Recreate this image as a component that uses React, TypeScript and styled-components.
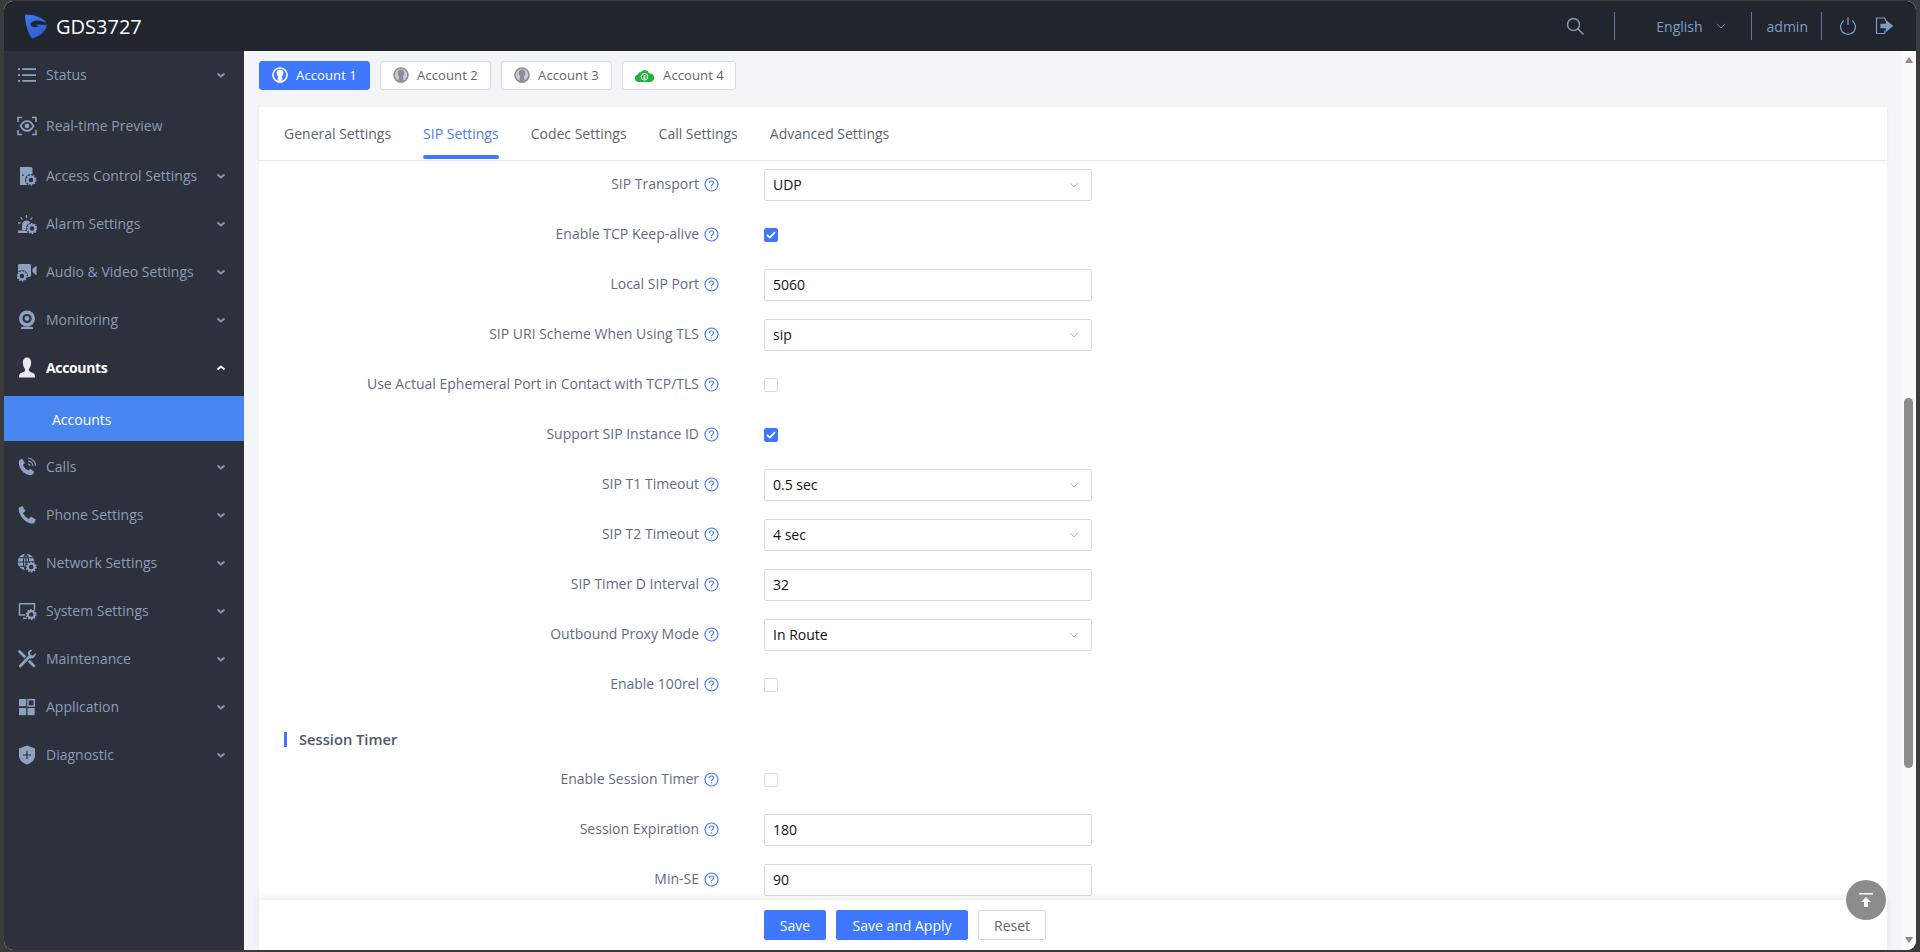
import React from "react";
import styled, { createGlobalStyle } from "styled-components";

const Global = createGlobalStyle`
  html, body { margin: 0; padding: 0; height: 100%; overflow: hidden; background: #3b3b3b; }
  #root { height: 100%; }
  * { box-sizing: border-box; }
  body { font-family: "Open Sans", "Liberation Sans", sans-serif; }
`;

const Frame = styled.div`
  width: 1912px; height: 949px; margin: 1px 4px 0; border-radius: 9px; overflow: hidden;
  display: flex; flex-direction: column; background: #f3f6f9; position: relative;
`;
const Header = styled.header`
  height: 50px; flex: none; background: #20252e; display: flex; align-items: center; color: #7d9dc6; font-size: 14px;
`;
const Brand = styled.div`
  display: flex; align-items: center; color: #fff; font-size: 20px; padding-left: 20px; gap: 8px; flex: 1;
  svg { flex: none; }
`;
const HeaderIcon = styled.span<{ $mr?: number }>`
  display: flex; align-items: center; margin-right: ${(p) => p.$mr ?? 0}px;
`;
const Sep = styled.span<{ $ml: number; $mr: number }>`
  width: 1px; height: 28px; background: #5f7c9e; margin: 0 ${(p) => p.$mr}px 0 ${(p) => p.$ml}px;
`;
const Lang = styled.span`
  display: flex; align-items: center; gap: 13px;
`;
const Row = styled.div`
  flex: 1; display: flex; min-height: 0;
`;
const Sidebar = styled.nav`
  width: 240px; flex: none; background: #2d313c; color: #8b9cb8; font-size: 14px;
`;
const Item = styled.div<{ $tall?: boolean; $active?: boolean }>`
  height: ${(p) => (p.$tall ? 54 : 48)}px; margin-bottom: ${(p) => (p.$tall ? -1 : 0)}px;
  display: flex; align-items: center; padding: 0 18px 0 13px;
  color: ${(p) => (p.$active ? "#fff" : "#8b9cb8")};
  font-weight: ${(p) => (p.$active ? 700 : 400)};
  letter-spacing: ${(p) => (p.$active ? "-0.35px" : "0")};
`;
const ItemIcon = styled.span<{ $active?: boolean }>`
  width: 20px; height: 20px; display: flex; align-items: center; justify-content: center; margin-right: 9px;
  color: ${(p) => (p.$active ? "#e6e9ee" : "#8da2c0")};
`;
const ItemLabel = styled.span`
  flex: 1; white-space: nowrap; padding-bottom: 2px;
`;
const SubItem = styled.div`
  height: 45px; margin: 4px 0 2px; background: #4785f0; color: #fff; display: flex; align-items: center; padding: 1px 0 0 48px; font-size: 14px;
`;
const Main = styled.main`
  flex: 1; min-width: 0; display: flex; flex-direction: column; padding: 10px 14px 0 15px; position: relative;
`;
const Accounts = styled.div`
  display: flex; gap: 10px; margin-bottom: 17px; flex: none;
`;
const AccountBtn = styled.div<{ $on?: boolean; $w: number }>`
  width: ${(p) => p.$w}px; height: 29px; border-radius: 3px; display: flex; align-items: center; justify-content: center; gap: 8px;
  font-size: 13px; letter-spacing: 0.1px; padding-bottom: 1px;
  background: ${(p) => (p.$on ? "#3f78ff" : "#fff")};
  color: ${(p) => (p.$on ? "#fff" : "#5d6470")};
  border: 1px solid ${(p) => (p.$on ? "#3f78ff" : "#d9dcdf")};
`;
const Card = styled.section`
  flex: 1; min-height: 0; background: #fff; display: flex; flex-direction: column;
`;
const Tabs = styled.div`
  height: 54px; flex: none; display: flex; gap: 32px; padding-left: 25px; border-bottom: 1px solid #eaeaea;
  box-shadow: 0 1px 3px rgba(0,0,0,.05);
`;
const Tab = styled.div<{ $on?: boolean }>`
  position: relative; display: flex; align-items: center; height: 53px; font-size: 14px;
  color: ${(p) => (p.$on ? "#4c7cf5" : "#5d6470")};
  ${(p) => p.$on && `&::after { content: ""; position: absolute; left: 0; right: 0; bottom: 1px; height: 4px; border-radius: 2px; background: #3f78ff; }`}
`;
const Form = styled.div`
  flex: 1; min-height: 0; overflow: hidden; margin-top: -1px;
`;
const FormRow = styled.div`
  height: 50px; display: grid; grid-template-columns: 460px 328px; column-gap: 45px; align-items: center;
`;
const Label = styled.div`
  display: flex; justify-content: flex-end; align-items: center; gap: 5px; color: #5f6b85; font-size: 14px; white-space: nowrap;
  padding-bottom: 2px;
`;
const LabelText = styled.span`
  position: relative; top: -1px;
`;
const Field = styled.div`
  height: 32px; border: 1px solid #d9d9d9; border-radius: 2px; display: flex; align-items: center; justify-content: space-between;
  padding: 0 12px 1px 8px; color: #111; font-size: 14px;
`;
const Check = styled.span<{ $on?: boolean }>`
  width: 14px; height: 14px; border-radius: 2px; display: flex; align-items: center; justify-content: center;
  background: ${(p) => (p.$on ? "#3f78ff" : "#fff")};
  border: 1px solid ${(p) => (p.$on ? "#3f78ff" : "#d9d9d9")};
`;
const Section = styled.div`
  height: 45px; padding: 22px 0 0 25px; display: flex; align-items: flex-start;
`;
const SectionTitle = styled.h3`
  margin: 0; border-left: 3px solid #3f78ff; padding-left: 12px; height: 15px; line-height: 15px; font-size: 14.7px; font-weight: 600; color: #4f5868; white-space: nowrap;
`;
const Footer = styled.div`
  height: 50px; flex: none; background: #fff; display: flex; gap: 10px; padding: 10px 0 0 505px;
  box-shadow: 0 -3px 8px rgba(0,0,0,.07); position: relative;
`;
const Btn = styled.div<{ $ghost?: boolean; $w: number }>`
  width: ${(p) => p.$w}px; height: 30px; border-radius: 2px; display: flex; align-items: center; justify-content: center; font-size: 14px;
  background: ${(p) => (p.$ghost ? "#fff" : "#3f78ff")};
  color: ${(p) => (p.$ghost ? "#666" : "#fff")};
  border: 1px solid ${(p) => (p.$ghost ? "#d9d9d9" : "#3f78ff")};
`;
const Scrollbar = styled.div`
  width: 15px; flex: none; background: #fafafa; display: flex; flex-direction: column; align-items: center;
`;
const ArrowUp = styled.span`
  margin-top: 6px; width: 0; height: 0; border-left: 4.5px solid transparent; border-right: 4.5px solid transparent; border-bottom: 6px solid #8c8c8c;
`;
const Thumb = styled.span`
  margin-top: 335px; width: 9px; height: 370px; border-radius: 5px; background: #8c8c8c;
`;
const ArrowDown = styled.span`
  margin-top: 169px; width: 0; height: 0; border-left: 4.5px solid transparent; border-right: 4.5px solid transparent; border-top: 6px solid #8c8c8c;
`;
const ToTop = styled.div`
  position: absolute; right: 15px; bottom: 30px; width: 40px; height: 40px; border-radius: 50%; background: #8c8c8c; display: flex; align-items: center; justify-content: center;
`;

const Gear = ({ x, y, c = "#2d313c", f = "currentColor" }: { x: number; y: number; c?: string; f?: string }) => (
  <g>
    <circle cx={x} cy={y} r={6} fill={c} />
    <circle cx={x} cy={y} r={3.4} fill="none" stroke={f} strokeWidth={2.2} />
    <circle cx={x} cy={y} r={4.8} fill="none" stroke={f} strokeWidth={1.4} strokeDasharray="1.6 1.4" />
  </g>
);

const S = ({ children }: { children: React.ReactNode }) => (
  <svg width="20" height="20" viewBox="0 0 20 20" fill="currentColor">{children}</svg>
);

const icons: Record<string, React.ReactNode> = {
  status: (
    <S>
      <path d="M1 3.2h2v1.7H1zM1 9.2h2v1.7H1zM1 15.1h2v1.7H1zM5.2 3.2H19v1.7H5.2zM5.2 9.2H19v1.7H5.2zM5.2 15.1H19v1.7H5.2z" />
    </S>
  ),
  preview: (
    <S>
      <path d="M1 6V1.5h4M15 1.5h4V6M1 14v4.5h4M15 18.500h4V14" fill="none" stroke="currentColor" strokeWidth="1.6" />
      <path d="M3.500 10C5.500 6.500 7.700 5.200 10 5.200S14.500 6.500 16.500 10C14.500 13.500 12.300 14.800 10 14.800S5.500 13.500 3.500 10Z" fill="none" stroke="currentColor" strokeWidth="1.700" />
      <circle cx="10" cy="10" r="2.400" />
    </S>
  ),
  access: (
    <S>
      <path d="M3 1h11a1.500 1.500 0 0 1 1.500 1.500V13H12v6H3z" />
      <rect x="5" y="8.500" width="1.800" height="1.300" fill="#2d313c" />
      <Gear x={14} y={14} />
    </S>
  ),
  alarm: (
    <S>
      <path d="M5 16v-5a4.500 4.500 0 0 1 9 0v5zM1 16.500h13V19H1z" />
      <path d="M9.500 1v3M3.600 3.400l2 2.200M15.400 3.400l-2 2.200M1 9h2.600" stroke="currentColor" strokeWidth="1.300" />
      <Gear x={15} y={14.500} />
    </S>
  ),
  video: (
    <S>
      <path d="M1 3.500A1.500 1.500 0 0 1 2.500 2h10A1.500 1.500 0 0 1 14 3.500v10a1.500 1.500 0 0 1-1.500 1.500H3A2 2 0 0 1 1 13zM15.500 7l4-3.500v10l-4-3.500z" />
      <Gear x={5} y={14} />
    </S>
  ),
  monitor: (
    <S>
      <circle cx="10" cy="8.500" r="8" />
      <circle cx="10" cy="8.500" r="4.600" fill="#2d313c" />
      <circle cx="10" cy="8.500" r="2.400" />
      <path d="M4 17.500c2-1.300 10-1.300 12 0v1.500H4z" />
    </S>
  ),
  user: (
    <svg width="20" height="22" viewBox="0 0 20 22" fill="currentColor">
      <path d="M10 .5c3 0 4.300 2.600 4.100 5.800-.2 2.400-1 4.500-2.100 5.800-.4 1.200 0 2 1 2.600l3.500 1.500c1 .5 1.500 1.500 1.500 4.300h-16c0-2.800.5-3.800 1.500-4.300L7 14.700c1-.6 1.400-1.400 1-2.600-1.100-1.300-1.900-3.400-2.100-5.800C5.700 3.100 7 .5 10 .5z" />
    </svg>
  ),
  calls: (
    <S>
      <path d="M2 3.500 5 1.500l3 4.500-2 1.700c.7 2.400 2.700 4.700 5.500 5.800l1.600-1.700 4.200 3-2 3c-1.500.8-4 .5-7-1.200C3.500 13.700 1 8 2 3.500z" />
      <path d="M11 1c4 .3 7.300 3.500 7.700 7.600M11 4c2.500.2 4.600 2.300 4.900 4.800M11 6.800c1.100.2 2 1.100 2.200 2.200" fill="none" stroke="currentColor" strokeWidth="1.200" />
    </S>
  ),
  phone: (
    <S>
      <path d="M2 2.500 5.500 1l3 5L6 8c.8 2.300 3 4.700 5.800 6l2-2.400 5 3-1.600 3.600c-2 .8-5.200.2-8.700-2.200C3.500 12.300 1 6.500 2 2.500z" />
    </S>
  ),
  network: (
    <S>
      <circle cx="9" cy="9" r="8.300" />
      <path d="M9 .7v16.600M.7 9h16.600M2.200 4.800h13.600M2.200 13.200h13.600M9 .7C5.500 4 5.500 14 9 17.300M9 .7c3.500 3.300 3.500 13.300 0 16.600" fill="none" stroke="#2d313c" strokeWidth="1.100" />
      <Gear x={14.200} y={14} />
    </S>
  ),
  system: (
    <S>
      <path d="M2.500 2.700h15v8M9 14H2.500V2.700" fill="none" stroke="currentColor" strokeWidth="1.500" />
      <path d="M6 16.500h5V18H6z" />
      <Gear x={14.200} y={13.500} />
    </S>
  ),
  tools: (
    <S>
      <path d="M2.500 2.500 16.800 16.800" fill="none" stroke="currentColor" strokeWidth="2.800" strokeLinecap="round" />
      <path d="M3.300 17 12.500 7.600" fill="none" stroke="#2d313c" strokeWidth="5" />
      <path d="M3.300 17 12.500 7.600" fill="none" stroke="currentColor" strokeWidth="2.800" strokeLinecap="round" />
      <path d="M18.700 3.800 16 6.500l-2.500-.5-.5-2.500 2.700-2.700c-2.800-.8-5.300 1.500-4.700 4.300l1.800 4.500c2.800.6 6.700-2 5.900-5.800z" />
    </S>
  ),
  apps: (
    <S>
      <rect x="2" y="2" width="7.200" height="7.200" />
      <rect x="11" y="2.700" width="6.300" height="6.300" fill="none" stroke="currentColor" strokeWidth="1.500" />
      <rect x="2" y="11" width="7.200" height="7.200" />
      <rect x="10.500" y="11" width="7.200" height="7.200" />
    </S>
  ),
  shield: (
    <S>
      <path d="M10 .5 18 3.500v7c0 4.500-3.500 7.500-8 9-4.500-1.500-8-4.500-8-9v-7z" />
      <path d="M10 6v8M6 10h8" stroke="#2d313c" strokeWidth="1.200" />
    </S>
  ),
};

const menu: [string, string][] = [
  ["status", "Status"],
  ["preview", "Real-time Preview"],
  ["access", "Access Control Settings"],
  ["alarm", "Alarm Settings"],
  ["video", "Audio & Video Settings"],
  ["monitor", "Monitoring"],
  ["user", "Accounts"],
  ["calls", "Calls"],
  ["phone", "Phone Settings"],
  ["network", "Network Settings"],
  ["system", "System Settings"],
  ["tools", "Maintenance"],
  ["apps", "Application"],
  ["shield", "Diagnostic"],
];

const Chevron = ({ up, color = "#8a94a6" }: { up?: boolean; color?: string }) => (
  <svg width="10" height="8" viewBox="0 0 10 8" fill="none" stroke={color} strokeWidth="2">
    <path d={up ? "M1.500 5.500 5 2.500l3.500 3" : "M1.500 2.500 5 5.500l3.500-3"} />
  </svg>
);
const ThinChevron = ({ color = "#b8b8b8" }: { color?: string }) => (
  <svg width="10" height="6" viewBox="0 0 10 6" fill="none" stroke={color} strokeWidth="1">
    <path d="M1 .8 5 5l4-4.200" />
  </svg>
);
const Help = () => (
  <svg width="15" height="15" viewBox="0 0 15 15" fill="none" stroke="#4a7df5" strokeWidth="1.200" style={{ flex: "none" }}>
    <circle cx="7.500" cy="7.500" r="6.500" />
    <path d="M5.400 6c0-1.300 1-2 2.100-2s2.100.7 2.100 1.900c0 1.500-2.100 1.500-2.100 3" />
    <path d="M7.500 10.300v1.100" />
  </svg>
);
const AccountIcon = ({ on }: { on?: boolean }) => {
  const c = on ? "#fff" : "#8a8f99";
  const bg = on ? "#3f78ff" : "#c9ccd2";
  return (
    <svg width="16" height="16" viewBox="0 0 16 16">
      <circle cx="8" cy="8" r="7.800" fill={c} />
      <circle cx="8" cy="8" r="6.200" fill={bg} />
      <path d="M8 2.500c2.400 0 3.600 1.700 3.300 4-.2 1.300-.8 2.200-1.300 2.800l.8 6.200H5.200l.8-6.200c-.5-.6-1.100-1.500-1.300-2.800C4.400 4.200 5.600 2.500 8 2.500z" fill={c} />
    </svg>
  );
};
const CloudIcon = () => (
  <svg width="21" height="16" viewBox="0 0 21 16">
    <path d="M4.500 15A3.800 3.800 0 0 1 3.800 7.500 3 3 0 0 1 7 5.300 4.500 4.500 0 0 1 15.200 6.400 4.300 4.300 0 0 1 16.500 15z" fill="#22b33c" />
    <circle cx="10.500" cy="9.800" r="3.300" fill="none" stroke="#fff" strokeWidth="1" />
    <rect x="9.700" y="7.800" width="1.600" height="4.500" fill="#fff" />
  </svg>
);
const Tick = () => (
  <svg width="10" height="8" viewBox="0 0 10 8" fill="none" stroke="#fff" strokeWidth="1.800">
    <path d="M1 4l2.800 2.600L9 1.200" />
  </svg>
);

type F = { l: string; t: "select" | "check" | "input"; v?: string; on?: boolean };
const before: F[] = [
  { l: "SIP Transport", t: "select", v: "UDP" },
  { l: "Enable TCP Keep-alive", t: "check", on: true },
  { l: "Local SIP Port", t: "input", v: "5060" },
  { l: "SIP URI Scheme When Using TLS", t: "select", v: "sip" },
  { l: "Use Actual Ephemeral Port in Contact with TCP/TLS", t: "check" },
  { l: "Support SIP Instance ID", t: "check", on: true },
  { l: "SIP T1 Timeout", t: "select", v: "0.5 sec" },
  { l: "SIP T2 Timeout", t: "select", v: "4 sec" },
  { l: "SIP Timer D Interval", t: "input", v: "32" },
  { l: "Outbound Proxy Mode", t: "select", v: "In Route" },
  { l: "Enable 100rel", t: "check" },
];
const after: F[] = [
  { l: "Enable Session Timer", t: "check" },
  { l: "Session Expiration", t: "input", v: "180" },
  { l: "Min-SE", t: "input", v: "90" },
];

const Line = ({ f }: { f: F }) => (
  <FormRow>
    <Label>
      <LabelText>{f.l}</LabelText>
      <Help />
    </Label>
    {f.t === "check" ? (
      <Check $on={f.on}>{f.on && <Tick />}</Check>
    ) : (
      <Field>
        {f.v}
        {f.t === "select" && <ThinChevron />}
      </Field>
    )}
  </FormRow>
);

export default function App() {
  return (
    <>
      <Global />
      <Frame>
        <Header>
          <Brand>
            <svg width="24" height="25" viewBox="0 0 24 25">
              <defs>
                <linearGradient id="lg" x1="0" y1="0" x2="1" y2="1">
                  <stop offset="0" stopColor="#3f7bf5" />
                  <stop offset="1" stopColor="#2a55c8" />
                </linearGradient>
              </defs>
              <path d="M1 1C9 0 18 3 23 9 16 5.500 9 5.500 7 9c-1.200 2.500 1 4.500 4 4.300l4-1-3-1.800 11 .5C22 18 15 22.500 8 24.500 4 19 1 9 1 1Z" fill="url(#lg)" />
            </svg>
            GDS3727
          </Brand>
          <HeaderIcon>
            <svg width="20" height="20" viewBox="0 0 20 20" fill="none" stroke="#8a98a8" strokeWidth="1.500">
              <circle cx="8.500" cy="8.500" r="6" />
              <path d="M13 13l5.500 5.500" />
            </svg>
          </HeaderIcon>
          <Sep $ml={29} $mr={41} />
          <Lang>
            English
            <ThinChevron color="#6f88a8" />
          </Lang>
          <Sep $ml={25} $mr={15} />
          admin
          <Sep $ml={13} $mr={17} />
          <HeaderIcon $mr={18}>
            <svg width="18" height="18" viewBox="0 0 18 18" fill="none" stroke="#7d9dc6" strokeWidth="1.300">
              <path d="M5 3.500a7.500 7.500 0 1 0 8 0M9 .5v7.500" />
            </svg>
          </HeaderIcon>
          <HeaderIcon $mr={23}>
            <svg width="18" height="18" viewBox="0 0 18 18" fill="none" stroke="#7d9dc6" strokeWidth="1.200">
              <path d="M10 1H1.500v15.500H10M10 1l.5 3M10 16.500v-3" />
              <path d="M6 7.300h5.500V4.300l6 4.700-6 4.700v-3H6z" fill="#7d9dc6" />
            </svg>
          </HeaderIcon>
        </Header>
        <Row>
          <Sidebar>
            {menu.map(([ic, label]) => {
              const active = label === "Accounts";
              return (
                <React.Fragment key={label}>
                  <Item $tall={ic === "preview"} $active={active}>
                    <ItemIcon $active={active}>{icons[ic]}</ItemIcon>
                    <ItemLabel>{label}</ItemLabel>
                    {ic !== "preview" && <Chevron up={active} color={active ? "#fff" : "#8a94a6"} />}
                  </Item>
                  {active && <SubItem>Accounts</SubItem>}
                </React.Fragment>
              );
            })}
          </Sidebar>
          <Main>
            <Accounts>
              <AccountBtn $on $w={111}>
                <AccountIcon on />
                Account 1
              </AccountBtn>
              <AccountBtn $w={111}>
                <AccountIcon />
                Account 2
              </AccountBtn>
              <AccountBtn $w={111}>
                <AccountIcon />
                Account 3
              </AccountBtn>
              <AccountBtn $w={114}>
                <CloudIcon />
                Account 4
              </AccountBtn>
            </Accounts>
            <Card>
              <Tabs>
                <Tab>General Settings</Tab>
                <Tab $on>SIP Settings</Tab>
                <Tab>Codec Settings</Tab>
                <Tab>Call Settings</Tab>
                <Tab>Advanced Settings</Tab>
              </Tabs>
              <Form>
                {before.map((f) => (
                  <Line key={f.l} f={f} />
                ))}
                <Section>
                  <SectionTitle>Session Timer</SectionTitle>
                </Section>
                {after.map((f) => (
                  <Line key={f.l} f={f} />
                ))}
              </Form>
              <Footer>
                <Btn $w={62}>Save</Btn>
                <Btn $w={132}>Save and Apply</Btn>
                <Btn $ghost $w={68}>Reset</Btn>
              </Footer>
            </Card>
            <ToTop>
              <svg width="16" height="16" viewBox="0 0 16 16" fill="#fff">
                <rect x="1" y="1" width="14" height="1.500" />
                <path d="M8 5l5 5H10v5H6v-5H3z" />
              </svg>
            </ToTop>
          </Main>
          <Scrollbar>
            <ArrowUp />
            <Thumb />
            <ArrowDown />
          </Scrollbar>
        </Row>
      </Frame>
    </>
  );
}
